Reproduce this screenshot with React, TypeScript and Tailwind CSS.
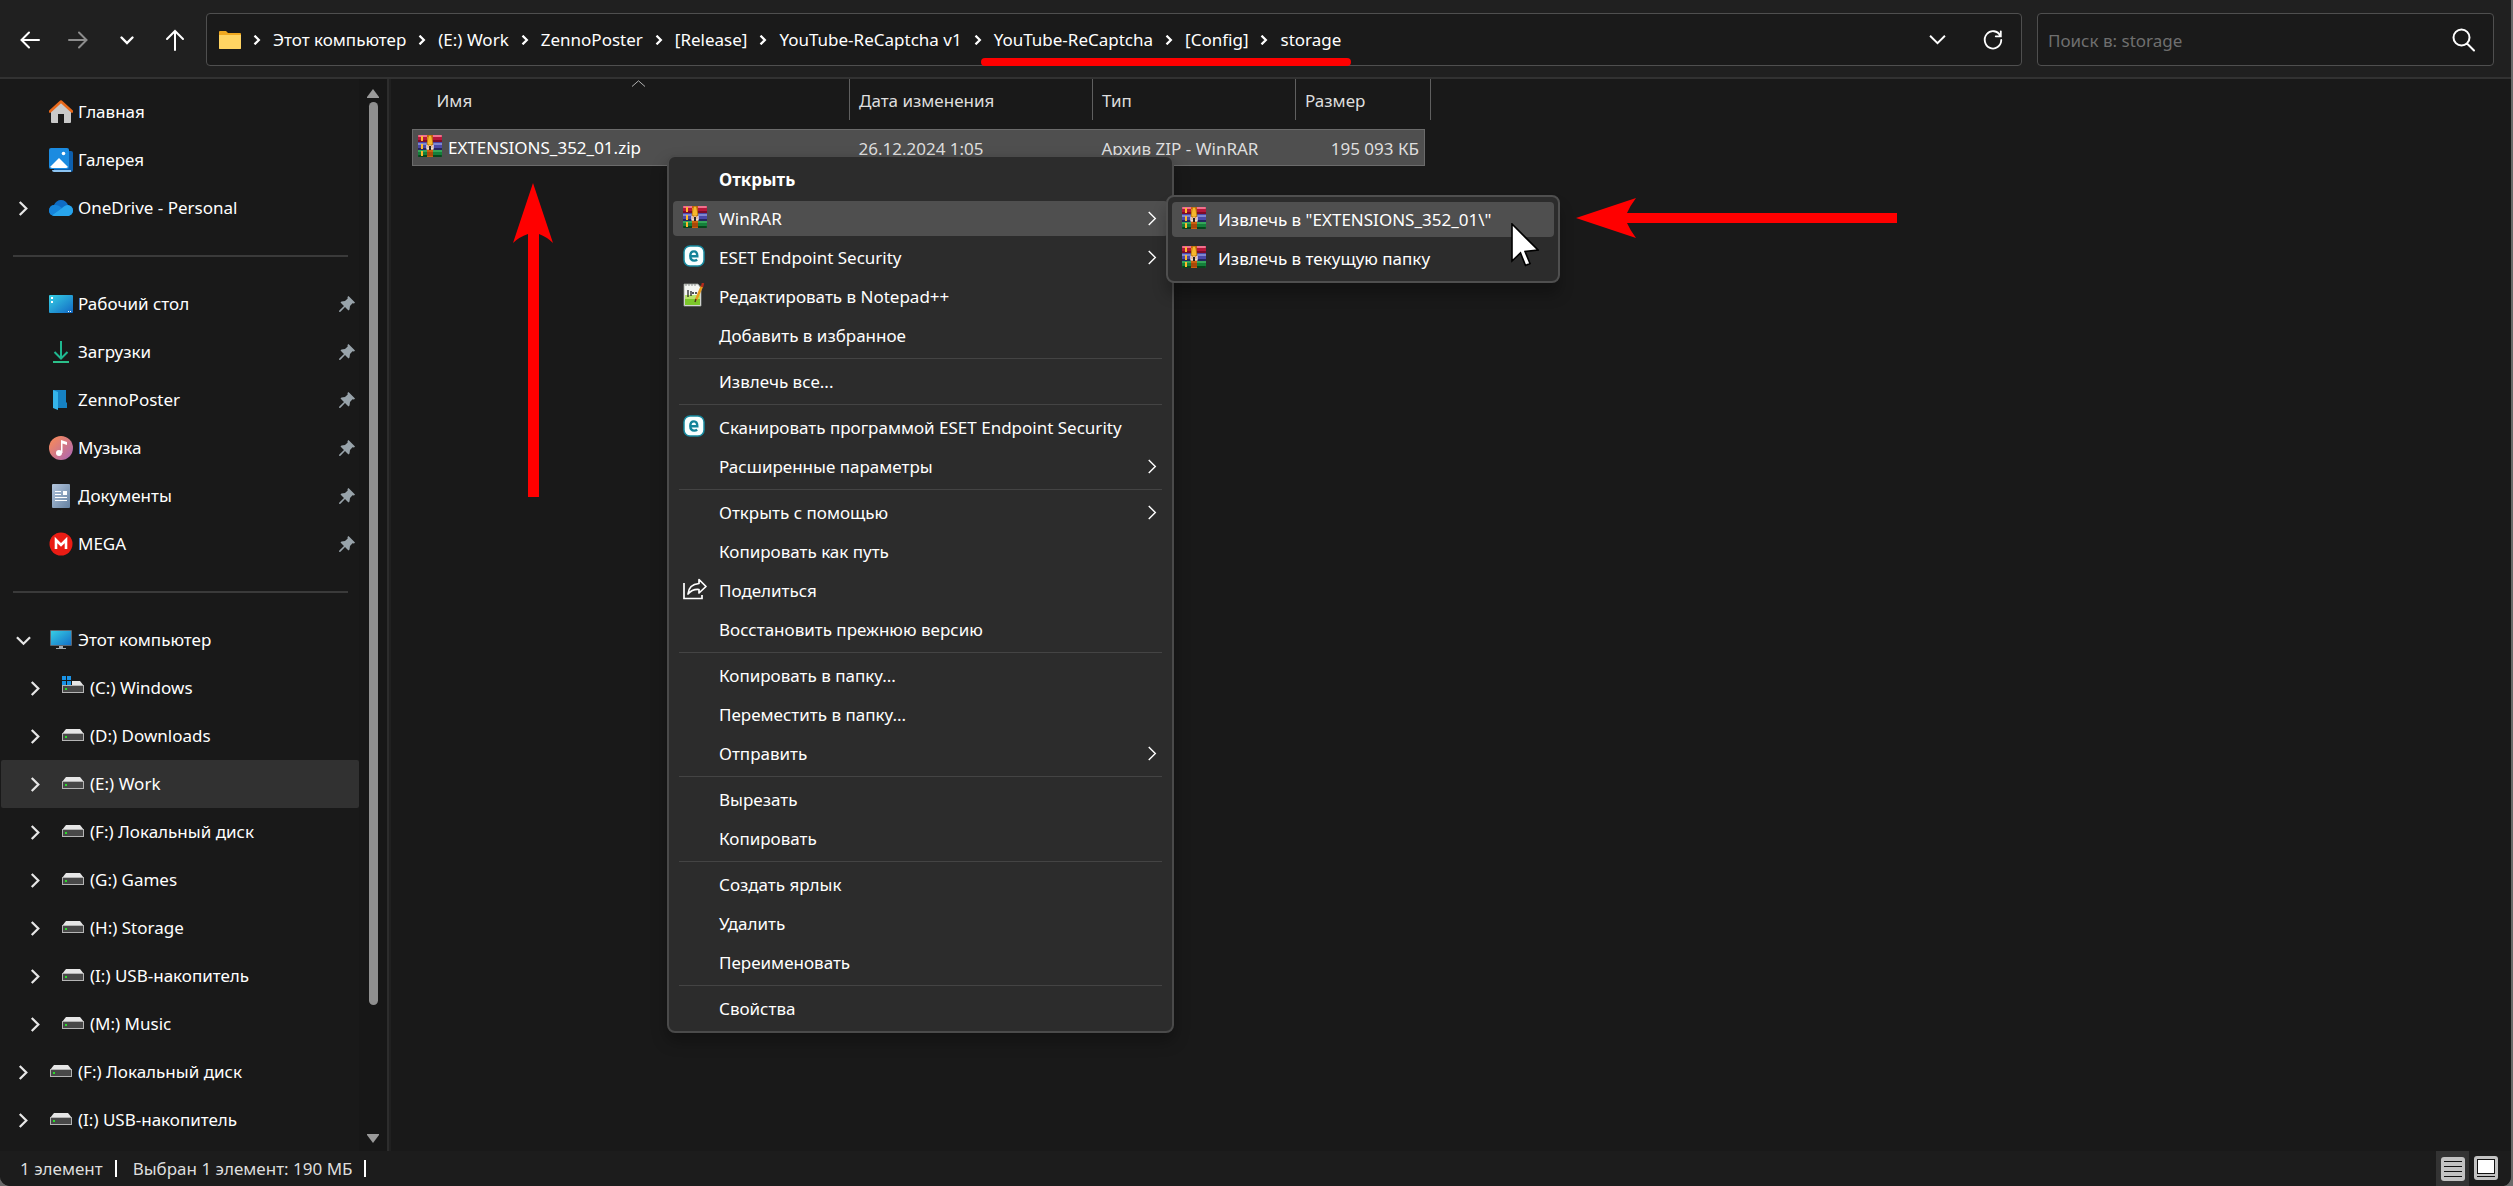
import type { ReactNode } from 'react'

type IconProps = { className?: string }

/* ---------- icons ---------- */

function WinRarIcon({ className = 'h-[22px] w-6' }: IconProps) {
  return (
    <svg viewBox="0 0 24 22" className={className} aria-hidden="true">
      <rect x="0" y="0" width="24" height="7" rx="1" fill="#b5173a" />
      <rect x="0" y="0" width="24" height="2" rx="1" fill="#f0708c" />
      <rect x="0" y="5" width="24" height="2" fill="#7d0c28" />
      <rect x="0" y="7" width="24" height="8" fill="#4a49a8" />
      <rect x="0" y="8" width="24" height="2" fill="#7f86cf" />
      <rect x="0" y="13" width="24" height="2" fill="#26265e" />
      <rect x="0" y="15" width="24" height="7" rx="1" fill="#14803a" />
      <rect x="0" y="15" width="24" height="2" fill="#35a55a" />
      <rect x="0" y="20" width="24" height="2" rx="1" fill="#07461c" />
      <rect x="3" y="1" width="2" height="5" fill="#ffb92e" />
      <rect x="3" y="9" width="2" height="5" fill="#ffb92e" />
      <rect x="3" y="16" width="2" height="5" fill="#ffb92e" />
      <rect x="9" y="0" width="6" height="22" fill="#c9600f" />
      <rect x="9" y="2" width="2" height="8" fill="#f2a21c" />
      <rect x="9" y="17" width="6" height="4" fill="#a8480a" />
      <path d="M10 3Q10 0 12 0Q14 0 14 3L15 9Q12 12 9 9Z" fill="#f6b72b" stroke="#9a5a08" strokeWidth=".6" />
      <path d="M9 10V14H11V11H13V14H15V10" fill="none" stroke="#fff" strokeWidth="1.2" />
      <rect x="11" y="11" width="2" height="4" fill="#222" />
    </svg>
  )
}

function EsetIcon() {
  return (
    <svg viewBox="0 0 22 22" className="size-[22px]" aria-hidden="true">
      <rect x="1" y="1" width="20" height="20" rx="6" fill="#f8ffff" stroke="#178aa0" strokeWidth="1.5" />
      <path d="M7.5 11.3H14.3C14.3 8 13 6.4 11 6.4S7.3 8 7.3 11 8.800 15.600 11.300 15.600C12.500 15.600 13.400 15.300 14.200 14.700" fill="none" stroke="#138399" strokeWidth="2.4" />
    </svg>
  )
}

function NotepadIcon() {
  return (
    <svg viewBox="0 0 22 24" className="h-6 w-[22px]" aria-hidden="true">
      <path d="M1 1H15L18 5V23H1Z" fill="#f4f6f2" stroke="#9aa09a" strokeWidth=".8" />
      <path d="M2 12H17V22H2Z" fill="#7cc72a" />
      <path d="M2 12H17V16H2Z" fill="#b9e36a" />
      <path d="M3 1V3M6 1V3M9 1V3M12 1V3" stroke="#8b8f8b" strokeWidth="1" />
      <path d="M5 7V14M8 8V13M9 10H11M12 10H14" stroke="#222" strokeWidth="1.3" />
      <path d="M19 3L13 17" stroke="#e89a1c" strokeWidth="2.6" />
      <path d="M20 0L19 4" stroke="#b52a1a" strokeWidth="2.4" />
      <path d="M13 16L12 19" stroke="#4a3218" strokeWidth="1.4" />
    </svg>
  )
}

function ShareIcon() {
  return (
    <svg viewBox="0 0 24 22" className="h-[22px] w-6" fill="none" stroke="#fff" strokeWidth="1.7" aria-hidden="true">
      <path d="M1 5V20.500H19V17" />
      <path d="M16 1.500L23 8.500L16 15V11.500C11 11 8 12.500 5 16C5.500 10 9.500 6 16 5.500Z" strokeLinejoin="round" />
    </svg>
  )
}

function HomeIcon() {
  return (
    <svg viewBox="0 0 24 24" className="size-6" aria-hidden="true">
      <path d="M2 10L12 1L22 10V22Q22 23 21 23H15V14H9V23H3Q2 23 2 22Z" fill="#c9c9c9" />
      <path d="M1 11.500L12 1.500L23 11.500" fill="none" stroke="#e8681a" strokeWidth="2.600" strokeLinecap="round" strokeLinejoin="round" />
    </svg>
  )
}

function GalleryIcon() {
  return (
    <svg viewBox="0 0 24 24" className="size-6" aria-hidden="true">
      <path d="M5 3H22Q24 3 24 5V22Q24 24 22 24H5Z" fill="#0d5fae" />
      <path d="M3 22H22V24H5Q3 24 3 22Z" fill="#8cc4f2" />
      <rect x="0" y="0" width="20" height="21" rx="2" fill="#1b8be0" />
      <path d="M1 19L10 10L19 19Q18 20 17 20H3Z" fill="#fff" />
      <circle cx="14.500" cy="5.500" r="1.800" fill="#fff" />
    </svg>
  )
}

function CloudIcon() {
  return (
    <svg viewBox="0 0 24 16" className="h-4 w-6" aria-hidden="true">
      <path d="M5 5C6 2 9 0 12 0C15.500 0 18 2 19 5C22 5.500 24 7.500 24 10.500C24 13.500 21.500 16 18.500 16H5.500C2.500 16 0 13.500 0 10.500C0 7.500 2 5.300 5 5Z" fill="#0f6cc4" />
      <path d="M5 5C8 4.500 10 5.500 13 8L3 15.300C1 14.300 0 12.500 0 10.500C0 7.500 2 5.300 5 5Z" fill="#1584da" />
      <path d="M13 8C15 6 17 5 19 5C22 5.500 24 7.500 24 10.500C24 13.500 21.500 16 18.500 16H5.500Q4 16 3 15.300Z" fill="#28a5ec" />
    </svg>
  )
}

function DesktopIcon() {
  return (
    <svg viewBox="0 0 24 18" className="h-[18px] w-6" aria-hidden="true">
      <defs>
        <linearGradient id="desk" x1="0" y1="0" x2="1" y2="1">
          <stop offset="0" stopColor="#36d0e4" />
          <stop offset="1" stopColor="#1268c4" />
        </linearGradient>
      </defs>
      <rect width="24" height="18" rx="1" fill="url(#desk)" />
      <path d="M2 2H4V4H2ZM2 6H4V8H2ZM19 16H20V17H19ZM21 16H22V17H21Z" fill="#fff" />
    </svg>
  )
}

function DownloadIcon() {
  return (
    <svg viewBox="0 0 24 24" className="size-6" fill="none" strokeWidth="2" aria-hidden="true">
      <path d="M12 1V18M5.500 12L12 18.500L18.500 12" stroke="#1fb890" />
      <path d="M4 22H20" stroke="#2bc08a" />
    </svg>
  )
}

function BlueFolderIcon() {
  return (
    <svg viewBox="0 0 24 24" className="size-6" aria-hidden="true">
      <path d="M4 2H17V14L18 15V20H4Z" fill="#1681c2" />
      <path d="M4 2L9 4V22L4 20Z" fill="#35b4ea" />
    </svg>
  )
}

function MusicIcon() {
  return (
    <svg viewBox="0 0 24 24" className="size-6" aria-hidden="true">
      <defs>
        <linearGradient id="mus" x1="0" y1="0" x2="1" y2="1">
          <stop offset=".2" stopColor="#ee8565" />
          <stop offset="1" stopColor="#a865b8" />
        </linearGradient>
      </defs>
      <circle cx="12" cy="12" r="12" fill="url(#mus)" />
      <circle cx="10" cy="17" r="3" fill="#fff" />
      <path d="M12 17V4L18 6V9L13.500 7.500V17Z" fill="#fff" />
    </svg>
  )
}

function DocumentIcon() {
  return (
    <svg viewBox="0 0 24 24" className="size-6" aria-hidden="true">
      <defs>
        <linearGradient id="doc" x1="0" y1="0" x2="1" y2="1">
          <stop offset="0" stopColor="#b3c6de" />
          <stop offset="1" stopColor="#64809f" />
        </linearGradient>
      </defs>
      <rect x="3" y="0" width="18" height="24" rx="1" fill="url(#doc)" />
      <path d="M6 7.500H12M6 10.500H12M6 13.500H18M6 16.500H18" stroke="#fff" strokeWidth="1.200" />
      <rect x="14" y="7" width="4" height="4" fill="#fff" />
    </svg>
  )
}

function MegaIcon() {
  return (
    <svg viewBox="0 0 24 24" className="size-6" aria-hidden="true">
      <circle cx="12" cy="12" r="11.500" fill="#ea1c14" />
      <path d="M7 17V8L12 13L17 8V17" fill="none" stroke="#fff" strokeWidth="2.600" />
    </svg>
  )
}

function MonitorIcon() {
  return (
    <svg viewBox="0 0 24 20" className="h-5 w-6" aria-hidden="true">
      <defs>
        <linearGradient id="mon" x1="0" y1="0" x2="1" y2="1">
          <stop offset="0" stopColor="#36cde4" />
          <stop offset="1" stopColor="#1470c8" />
        </linearGradient>
      </defs>
      <rect x="1" y="0" width="22" height="16" rx="1" fill="#5d6670" />
      <rect x="2" y="1" width="20" height="14" fill="url(#mon)" />
      <path d="M10 16H14V18H17V19H7V18H10Z" fill="#a5abb0" />
    </svg>
  )
}

function DriveIcon({ windows = false }: { windows?: boolean }) {
  return (
    <svg viewBox="0 0 24 24" className="size-6" aria-hidden="true">
      <path d="M5 5H19L23 10H1Z" fill="#e6e6e6" />
      <rect x="1" y="9" width="22" height="8" fill="#b4b4b4" />
      <rect x="2" y="10" width="20" height="6" fill="#484848" />
      <rect x="4" y="12" width="2" height="2" fill="#2bdc2b" />
      {windows && (
        <>
          <rect x="0" y="0" width="11" height="9" fill="#191919" />
          <path d="M1 0H5V4H1ZM6 0H10V4H6ZM1 5H5V9H1ZM6 5H10V9H6Z" fill="#1a93e6" />
        </>
      )}
    </svg>
  )
}

function PinIcon() {
  return (
    <svg viewBox="0 0 16 16" className="size-4" fill="#98a3aa" aria-hidden="true">
      <path d="M9.500 0L16 6.500L15 7.500L13.500 7.300L11 10L10.500 13.500L9.500 14.500L6 11L1.500 15.800L0 16L.3 14.500L5 10L1.500 6.500L2.500 5.500L6 5L8.700 2.500L8.500 1Z" />
    </svg>
  )
}

function Chevron({ d, className, width = 2 }: { d: string; className: string; width?: number }) {
  return (
    <svg viewBox="0 0 16 16" className={className} fill="none" stroke="currentColor" strokeWidth={width} aria-hidden="true">
      <path d={d} />
    </svg>
  )
}

const RIGHT = 'M4 1L11 8L4 15'
const DOWN = 'M1 4.500L8 11.500L15 4.500'

/* ---------- header ---------- */

const crumbs = ['Этот компьютер', '(E:) Work', 'ZennoPoster', '[Release]', 'YouTube-ReCaptcha v1', 'YouTube-ReCaptcha', '[Config]', 'storage']

function NavButton({ label, dim, children }: { label: string; dim?: boolean; children: ReactNode }) {
  return (
    <button type="button" aria-label={label} className={`flex size-6 items-center justify-center ${dim ? 'text-[#8d8d8d]' : 'text-white'}`}>
      {children}
    </button>
  )
}

function Stroke({ d, className = 'size-6', width = 2 }: { d: string; className?: string; width?: number }) {
  return (
    <svg viewBox="0 0 24 24" className={className} fill="none" stroke="currentColor" strokeWidth={width} strokeLinecap="round" aria-hidden="true">
      <path d={d} />
    </svg>
  )
}

function Header() {
  return (
    <header className="flex h-[79px] shrink-0 items-center border-b-2 border-[#323232] bg-[#202020] pt-[2px] pr-[17px]">
      <nav aria-label="Навигация" className="flex w-[206px] shrink-0 items-center pl-[18px]">
        <div className="flex w-[169px] items-center justify-between">
          <NavButton label="Назад">
            <Stroke d="M21 12H4M11 4.500L3.500 12L11 19.500" />
          </NavButton>
          <NavButton label="Вперёд" dim>
            <Stroke d="M3 12H20M13 4.500L20.500 12L13 19.500" />
          </NavButton>
          <NavButton label="Последние расположения">
            <Stroke d="M6.500 9.500L12 15L17.500 9.500" width={2.4} />
          </NavButton>
          <NavButton label="Вверх">
            <Stroke d="M12 22V3M4 11L12 3L20 11" />
          </NavButton>
        </div>
      </nav>
      <div className="flex h-[53px] min-w-0 flex-1 items-center rounded-[4px] border border-[#4f4f4f] bg-[#1a1a1a] pl-3">
        <svg viewBox="0 0 22 18" className="h-[18px] w-[22px] shrink-0" aria-hidden="true">
          <path d="M0 1Q0 0 1 0H7L9 2H21Q22 2 22 3V17Q22 18 21 18H1Q0 18 0 17Z" fill="#f0a81f" />
          <path d="M0 4H22V17Q22 18 21 18H1Q0 18 0 17Z" fill="#ffd463" />
        </svg>
        {crumbs.map((crumb) => (
          <div key={crumb} className="flex items-center">
            <span className="flex w-8 shrink-0 items-center justify-center">
              <Chevron d={RIGHT} className="size-[10px]" width={3.6} />
            </span>
            <button type="button" className="whitespace-nowrap">{crumb}</button>
          </div>
        ))}
        <div className="ml-auto flex items-center gap-5 pr-[10px]">
          <button type="button" aria-label="Показать историю" className="flex size-9 items-center justify-center">
            <Chevron d={DOWN} className="size-[17px]" width={1.8} />
          </button>
          <button type="button" aria-label="Обновить" className="flex size-9 items-center justify-center">
            <Stroke d="M20 7.500A9 9.500 0 1 0 21 12M20.500 2.500V8H15" width={2} className="size-[22px]" />
          </button>
        </div>
      </div>
      <label className="ml-[15px] flex h-[53px] w-[457px] shrink-0 items-center rounded-[4px] border border-[#4f4f4f] bg-[#1a1a1a] pr-[17px] pl-[10px]">
        <input type="text" aria-label="Поиск" placeholder="Поиск в: storage" className="min-w-0 flex-1 bg-transparent pt-[2px] outline-none placeholder:text-[#6f6f6f]" />
        <Stroke d="M9.500 1.500A8 8 0 1 0 9.500 17.500A8 8 0 1 0 9.500 1.500M15 15.500L22 22.500" />
      </label>
    </header>
  )
}

/* ---------- sidebar ---------- */

function NavRow({ icon, label, expand, nested, pinned, selected }: {
  icon: ReactNode
  label: string
  expand?: 'open' | 'closed'
  nested?: boolean
  pinned?: boolean
  selected?: boolean
}) {
  return (
    <li className={`ml-px flex h-12 items-center rounded-[2px] pr-1 ${nested ? 'pl-[26px]' : 'pl-[14px]'} ${selected ? 'bg-[#313131]' : ''}`}>
      {expand ? (
        <button type="button" aria-label={`Развернуть ${label}`} className="flex size-4 shrink-0 items-center justify-center text-[#e6e6e6]">
          <Chevron d={expand === 'open' ? DOWN : RIGHT} className="size-[15px]" width={2.4} />
        </button>
      ) : (
        <span className="w-4 shrink-0" />
      )}
      <a href="#" className="ml-[18px] flex h-full min-w-0 flex-1 items-center">
        <span className="flex w-6 shrink-0 justify-center">{icon}</span>
        <span className="ml-[5px] whitespace-nowrap">{label}</span>
      </a>
      {pinned && <PinIcon />}
    </li>
  )
}

function NavDivider() {
  return (
    <li role="separator" className="flex h-12 items-center pr-[11px] pl-[13px]">
      <span className="h-[2px] flex-1 bg-[#3a3a3a]" />
    </li>
  )
}

const pinnedItems: [string, ReactNode][] = [
  ['Рабочий стол', <DesktopIcon />],
  ['Загрузки', <DownloadIcon />],
  ['ZennoPoster', <BlueFolderIcon />],
  ['Музыка', <MusicIcon />],
  ['Документы', <DocumentIcon />],
  ['MEGA', <MegaIcon />],
]

const drives = ['(C:) Windows', '(D:) Downloads', '(E:) Work', '(F:) Локальный диск', '(G:) Games', '(H:) Storage', '(I:) USB-накопитель', '(M:) Music']

function Sidebar() {
  return (
    <aside className="flex w-[391px] shrink-0 border-r-2 border-[#202020]">
      <ul className="w-[359px] pt-[9px]">
        <NavRow icon={<HomeIcon />} label="Главная" />
        <NavRow icon={<GalleryIcon />} label="Галерея" />
        <NavRow icon={<CloudIcon />} label="OneDrive - Personal" expand="closed" />
        <NavDivider />
        {pinnedItems.map(([label, icon]) => (
          <NavRow key={label} icon={icon} label={label} pinned />
        ))}
        <NavDivider />
        <NavRow icon={<MonitorIcon />} label="Этот компьютер" expand="open" />
        {drives.map((label, i) => (
          <NavRow key={label} icon={<DriveIcon windows={i === 0} />} label={label} expand="closed" nested selected={label === '(E:) Work'} />
        ))}
        <NavRow icon={<DriveIcon />} label="(F:) Локальный диск" expand="closed" />
        <NavRow icon={<DriveIcon />} label="(I:) USB-накопитель" expand="closed" />
      </ul>
      <div className="flex w-[28px] flex-col items-center bg-[#171717] pt-[10px] pb-2">
        <button type="button" aria-label="Прокрутить вверх">
          <svg viewBox="0 0 12 9" className="h-[9px] w-3" fill="#9a9a9a" aria-hidden="true"><path d="M6 0L12 8V9H0V8Z" /></svg>
        </button>
        <div className="flex w-[9px] flex-1 flex-col pt-1">
          <span className="h-7/8 rounded-full bg-[#8f8f8f]" />
        </div>
        <button type="button" aria-label="Прокрутить вниз">
          <svg viewBox="0 0 12 9" className="h-[9px] w-3" fill="#9a9a9a" aria-hidden="true"><path d="M0 0H12V1L6 9L0 1Z" /></svg>
        </button>
      </div>
      <span className="flex-1 border-r-2 border-[#2d2d2d]" />
    </aside>
  )
}

/* ---------- file list ---------- */

function FileList() {
  return (
    <main className="min-w-0 flex-1 pl-[21px]">
      <table className="w-[1018px] table-fixed border-collapse text-left">
        <colgroup>
          <col className="w-[437px]" />
          <col className="w-[243px]" />
          <col className="w-[203px]" />
          <col className="w-[129px]" />
          <col className="w-[6px]" />
        </colgroup>
        <thead className="text-[#dedede]">
          <tr className="h-[41px]">
            <th className="border-r border-[#5f5f5f] pt-[2px] pl-6 font-normal">Имя</th>
            <th className="border-r border-[#5f5f5f] pt-[2px] pl-[9px] font-normal">Дата изменения</th>
            <th className="border-r border-[#5f5f5f] pt-[2px] pl-[9px] font-normal">Тип</th>
            <th className="pt-[2px] pl-[9px] font-normal">Размер</th>
            <th className="border-r border-[#5f5f5f]" />
          </tr>
        </thead>
        <tbody>
          <tr className="h-[9px]">
            <td colSpan={5} />
          </tr>
          <tr className="h-9 text-[#dedede]">
            <td className="border border-r-0 border-[#6b6b6b] bg-[#4f4f4f] pt-[2px] pl-[5px] text-white">
              <a href="#" className="flex items-center gap-[6px]">
                <span className="pb-1">
                  <WinRarIcon />
                </span>
                <span>EXTENSIONS_352_01.zip</span>
              </a>
            </td>
            <td className="border-y border-[#6b6b6b] bg-[#4f4f4f] pt-[3px] pl-[9px]">26.12.2024 1:05</td>
            <td className="border-y border-[#6b6b6b] bg-[#4f4f4f] pt-[3px] pl-[9px] whitespace-nowrap">Архив ZIP - WinRAR</td>
            <td className="border border-l-0 border-[#6b6b6b] bg-[#4f4f4f] pt-[3px] pr-[5px] text-right whitespace-nowrap">195 093 КБ</td>
            <td />
          </tr>
        </tbody>
      </table>
    </main>
  )
}

/* ---------- menus ---------- */

type Entry = { label: string; icon?: ReactNode; more?: boolean; bold?: boolean; active?: boolean }

const groups: Entry[][] = [
  [
    { label: 'Открыть', bold: true },
    { label: 'WinRAR', icon: <WinRarIcon />, more: true, active: true },
    { label: 'ESET Endpoint Security', icon: <EsetIcon />, more: true },
    { label: 'Редактировать в Notepad++', icon: <NotepadIcon /> },
    { label: 'Добавить в избранное' },
  ],
  [{ label: 'Извлечь все...' }],
  [
    { label: 'Сканировать программой ESET Endpoint Security', icon: <EsetIcon /> },
    { label: 'Расширенные параметры', more: true },
  ],
  [
    { label: 'Открыть с помощью', more: true },
    { label: 'Копировать как путь' },
    { label: 'Поделиться', icon: <ShareIcon /> },
    { label: 'Восстановить прежнюю версию' },
  ],
  [{ label: 'Копировать в папку...' }, { label: 'Переместить в папку...' }, { label: 'Отправить', more: true }],
  [{ label: 'Вырезать' }, { label: 'Копировать' }],
  [{ label: 'Создать ярлык' }, { label: 'Удалить' }, { label: 'Переименовать' }],
  [{ label: 'Свойства' }],
]

function MenuItem({ label, icon, more, bold, active }: Entry) {
  return (
    <button
      type="button"
      role="menuitem"
      className={`my-[2px] flex h-[35px] items-center rounded-[4px] pr-2 pl-[10px] text-left ${active ? 'bg-[#4f4f4f]' : ''}`}
    >
      <span className="flex w-6 shrink-0 pb-1">{icon}</span>
      <span className={`ml-3 flex-1 whitespace-nowrap ${bold ? 'font-bold' : ''}`}>{label}</span>
      {more && <Chevron d={RIGHT} className="size-[15px]" width={1.5} />}
    </button>
  )
}

function ContextMenu() {
  return (
    <div role="menu" className="absolute top-[155px] left-[667px] w-[507px] rounded-[8px] border-2 border-[#4a4a4a] bg-[#2c2c2c] px-1 py-[3px] shadow-[0_8px_16px_rgba(0,0,0,0.3)]">
      {groups.map((group, i) => (
        <div key={i} role="group" className="flex flex-col">
          {i > 0 && (
            <div role="separator" className="flex h-[7px] items-center px-[6px]">
              <span className="h-px flex-1 bg-[#444]" />
            </div>
          )}
          {group.map((entry) => (
            <MenuItem key={entry.label} {...entry} />
          ))}
        </div>
      ))}
    </div>
  )
}

function SubMenu() {
  return (
    <div role="menu" className="absolute top-[195px] left-[1166px] flex w-[394px] flex-col rounded-[8px] border-2 border-[#4f4f4f] bg-[#2c2c2c] px-1 py-[3px] shadow-[0_12px_14px_rgba(0,0,0,0.25)]">
      <MenuItem label={'Извлечь в "EXTENSIONS_352_01\\"'} icon={<WinRarIcon />} active />
      <MenuItem label="Извлечь в текущую папку" icon={<WinRarIcon />} />
    </div>
  )
}

/* ---------- status bar ---------- */

function StatusBar() {
  return (
    <footer className="flex h-[35px] shrink-0 items-center bg-[#1c1c1c] pr-2 pl-5 text-[#dedede]">
      <span>1 элемент</span>
      <span className="ml-3 h-[17px] w-[2px] bg-white" />
      <span className="ml-4">Выбран 1 элемент: 190 МБ</span>
      <span className="ml-3 h-[17px] w-[2px] bg-white" />
      <div className="ml-auto flex h-full items-center">
        <button type="button" aria-label="Таблица" className="flex h-full w-[33px] items-center justify-center bg-[#333]">
          <svg viewBox="0 0 24 24" className="size-6" aria-hidden="true">
            <rect width="24" height="24" rx="3" fill="#c2c2c2" />
            <path d="M3 4.500H21M3 9.500H21M3 14.500H21M3 19.500H21" stroke="#111" strokeWidth="1" />
          </svg>
        </button>
        <button type="button" aria-label="Крупные значки" className="flex h-full w-[34px] items-center justify-center pb-[2px]">
          <svg viewBox="0 0 24 24" className="size-6" aria-hidden="true">
            <rect width="24" height="24" rx="3" fill="#c2c2c2" />
            <rect x="3.500" y="3.500" width="17" height="14" fill="#fff" stroke="#111" />
            <path d="M3 20.500H21" stroke="#111" strokeWidth="1" />
          </svg>
        </button>
      </div>
    </footer>
  )
}

export default function App() {
  return (
    <div className="bg-[#6a6a6a]">
      <div className="relative flex min-h-screen flex-col overflow-hidden rounded-b-[10px] border-r-2 border-[#6a6a6a] bg-[#191919] font-['Noto_Sans',sans-serif] text-[17px] leading-6 text-white">
        <Header />
        <div className="flex flex-1">
          <Sidebar />
          <FileList />
        </div>
        <StatusBar />

        <svg viewBox="0 0 15 7" className="absolute top-[80px] left-[631px] h-[7px] w-[15px]" fill="none" stroke="#b0b0b0" aria-hidden="true">
          <path d="M1 6.500L7.500 .8L14 6.500" />
        </svg>

        <ContextMenu />
        <SubMenu />

        {/* red highlights */}
        <span className="absolute top-[58px] left-[981px] h-2 w-[370px] rounded-full bg-[#ff0000]" />
        <svg viewBox="0 0 40 314" className="absolute top-[183px] left-[513px] h-[314px] w-10" fill="#ff0000" aria-hidden="true">
          <path d="M20 0L40 60Q34 54 26 51V314H15V51Q6 54 0 60Z" />
        </svg>
        <svg viewBox="0 0 321 40" className="absolute top-[198px] left-[1576px] h-10 w-[321px]" fill="#ff0000" aria-hidden="true">
          <path d="M0 20L60 0Q54 8 51 15H321V25H51Q54 32 60 40Z" />
        </svg>

        {/* pointer */}
        <svg viewBox="0 0 28 44" className="absolute top-[223px] left-[1511px] h-11 w-7" aria-hidden="true">
          <path d="M1 1V38L9.500 30L14.500 42.500L19 40.500L14 28.500L27 27Z" fill="#fff" stroke="#000" strokeWidth="1.600" />
        </svg>
      </div>
    </div>
  )
}
